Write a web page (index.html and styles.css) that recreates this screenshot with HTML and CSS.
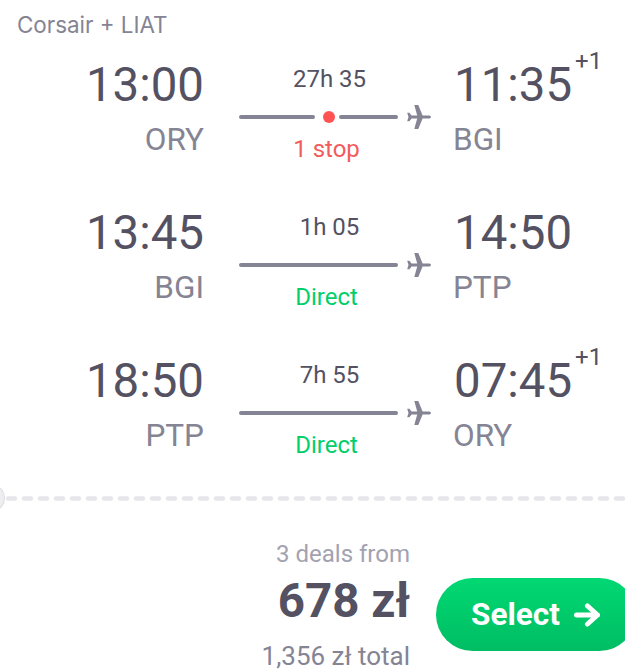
FILE: index.html
```html
<!DOCTYPE html>
<html lang="en">
<head>
  <meta charset="UTF-8">
  <title>Flight deal</title>
  <link rel="stylesheet" href="styles.css">
</head>
<body>
  <svg class="defs" width="0" height="0">
    <symbol id="plane" viewBox="0 0 26 26">
      <path d="M25 13c0-.9-1-1.500-2.400-1.500h-6L12.300 1H8.300l2.900 10.500h-5.600L3.400 8.700H1.200l1.300 4.300-1.300 4.300h2.200l2.200-2.800h5.600L8.300 25h4l4.300-10.500h6C24 14.500 25 13.900 25 13z"/>
    </symbol>
  </svg>

  <div class="carrier">Corsair + LIAT</div>

  <div class="leg">
    <div class="end end-from">
      <div class="time">13:00</div>
      <div class="code">ORY</div>
    </div>
    <div class="route">
      <div class="duration">27h 35</div>
      <div class="line">
        <span class="bar bar-first"></span>
        <span class="dot"></span>
        <span class="bar"></span>
        <svg class="plane"><use href="#plane"/></svg>
      </div>
      <div class="stops stops-red">1 stop</div>
    </div>
    <div class="end">
      <div class="time">11:35<sup>+1</sup></div>
      <div class="code">BGI</div>
    </div>
  </div>

  <div class="leg">
    <div class="end end-from">
      <div class="time">13:45</div>
      <div class="code">BGI</div>
    </div>
    <div class="route">
      <div class="duration">1h 05</div>
      <div class="line">
        <span class="bar"></span>
        <svg class="plane"><use href="#plane"/></svg>
      </div>
      <div class="stops stops-green">Direct</div>
    </div>
    <div class="end">
      <div class="time">14:50</div>
      <div class="code">PTP</div>
    </div>
  </div>

  <div class="leg">
    <div class="end end-from">
      <div class="time">18:50</div>
      <div class="code">PTP</div>
    </div>
    <div class="route">
      <div class="duration">7h 55</div>
      <div class="line">
        <span class="bar"></span>
        <svg class="plane"><use href="#plane"/></svg>
      </div>
      <div class="stops stops-green">Direct</div>
    </div>
    <div class="end">
      <div class="time">07:45<sup>+1</sup></div>
      <div class="code">ORY</div>
    </div>
  </div>

  <div class="divider">
    <span class="notch"></span>
    <svg class="dashes" width="625" height="5"><line x1="8" y1="2.500" x2="625" y2="2.500"/></svg>
  </div>

  <div class="footer">
    <div class="price">
      <div class="deals">3 deals from</div>
      <div class="amount">678 zł</div>
      <div class="total">1,356 zł total</div>
    </div>
    <button class="select-btn">Select <svg class="arrow" viewBox="0 0 28 24"><path d="M3.500 12h21M14.500 3l10 9-10 9"/></svg></button>
  </div>
</body>
</html>
```

FILE: styles.css
```css
html, body {
  height: 100%;
}
body {
  margin: 0;
  width: 625px;
  height: 670px;
  overflow: hidden;
  background: #fff;
  font-family: Roboto, sans-serif;
  color: #535162;
}
.defs {
  display: block;
  height: 0;
}
.carrier {
  padding: 11px 0 0 17px;
  height: 27px;
  line-height: 27px;
  font-family: Inter, sans-serif;
  font-size: 22.400px;
  color: #858494;
}
.leg {
  display: flex;
  height: 148px;
}
.end {
  width: 170px;
}
.end-from {
  width: 204px;
  text-align: right;
}
.time {
  height: 62px;
  padding-top: 16px;
  line-height: 62px;
  font-size: 47.400px;
  white-space: nowrap;
}
.end:not(.end-from) .time {
  margin-left: 1px;
}
.time sup {
  position: absolute;
  margin-top: -5px;
  margin-left: 3px;
  line-height: 24px;
  font-size: 24px;
  vertical-align: baseline;
}
.code {
  margin-top: 4px;
  line-height: 40px;
  font-size: 31.500px;
  color: #858494;
}
.route {
  width: 193px;
  margin: 0 21px 0 35px;
  text-align: center;
}
.duration {
  padding-top: 25px;
  width: 181px;
  line-height: 32px;
  font-size: 24px;
}
.line {
  display: flex;
  align-items: center;
  gap: 4px;
  height: 32px;
  margin-top: 6px;
}
.bar {
  flex: 1;
  height: 4px;
  border-radius: 2px;
  background: #858494;
}
.bar-first {
  flex: none;
  width: 76px;
  margin-right: 4px;
}
.dot {
  width: 12px;
  height: 12px;
  border-radius: 50%;
  background: #ff5252;
}
.plane {
  width: 26px;
  height: 26px;
  margin-left: 4px;
  fill: #858494;
}
.stops {
  width: 175px;
  line-height: 32px;
  font-size: 24px;
}
.stops-red {
  color: #f25c5c;
}
.stops-green {
  color: #00cf6a;
}
.divider {
  position: relative;
  height: 5px;
  margin-top: 14px;
}
.dashes {
  display: block;
  stroke: #e6e6eb;
  stroke-width: 4.500;
  stroke-linecap: round;
  stroke-dasharray: 7 9;
}
.notch {
  position: absolute;
  left: -14px;
  top: -10px;
  width: 17px;
  height: 22px;
  border-radius: 50%;
  background: #eeeef0;
  border: 1px solid #dddde2;
}
.footer {
  display: flex;
  justify-content: flex-end;
  align-items: flex-start;
  gap: 26px;
  margin-top: 35px;
}
.price {
  text-align: right;
}
.deals {
  margin-bottom: 2px;
  line-height: 36px;
  font-size: 24px;
  color: #a3a2b0;
}
.amount {
  line-height: 54px;
  font-size: 47.500px;
  font-weight: 700;
}
.total {
  margin-top: 7px;
  line-height: 42px;
  font-size: 26px;
  color: #858494;
}
.select-btn {
  display: flex;
  align-items: center;
  gap: 13px;
  flex: none;
  width: 200px;
  height: 73px;
  margin-top: 42px;
  margin-right: -11px;
  padding: 0 0 0 35px;
  border: 0;
  border-radius: 37px;
  background: linear-gradient(#00d873, #00bd63);
  color: #fff;
  font-family: Roboto, sans-serif;
  font-size: 31.500px;
  font-weight: 700;
}
.arrow {
  width: 28px;
  height: 24px;
  fill: none;
  stroke: #fff;
  stroke-width: 5;
  stroke-linecap: round;
  stroke-linejoin: round;
}
```
